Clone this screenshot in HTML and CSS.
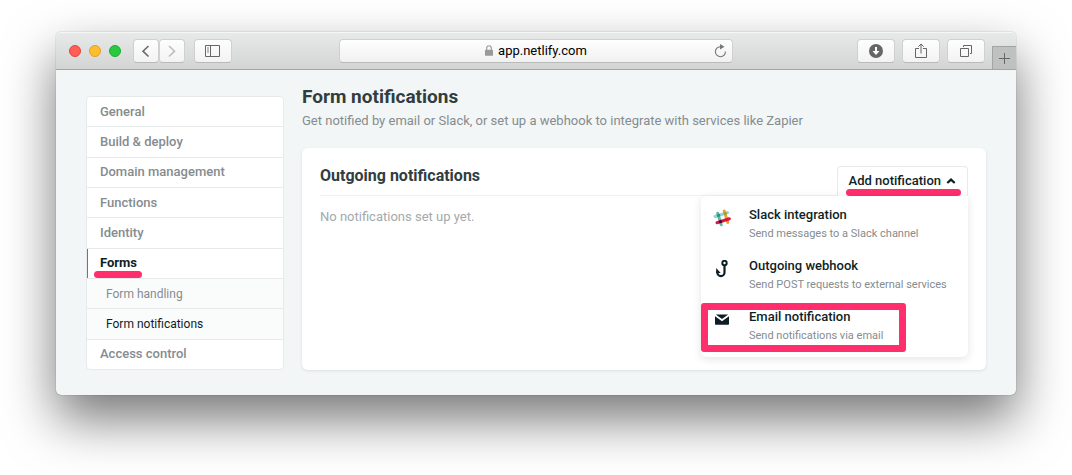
FILE: index.html
```
<!DOCTYPE html>
<html lang="en">
<head>
    <meta charset="UTF-8">
    <meta name="viewport" content="width=device-width, initial-scale=1.0">
    <title>Form notifications</title>
    <link rel="stylesheet" href="styles.css">
</head>
<body>
    <div class="window">
        <header class="toolbar">
            <div class="lights">
                <span class="light red"></span>
                <span class="light yellow"></span>
                <span class="light green"></span>
            </div>
            <div class="nav-buttons">
                <button class="tool-btn nav-btn" aria-label="Back">
                    <svg width="26" height="22" viewBox="0 0 26 22"><path d="M15.5 6 L10 11.2 L15.5 16.5" fill="none" stroke="#6b6b6b" stroke-width="1.6"/></svg>
                </button>
                <button class="tool-btn nav-btn" aria-label="Forward">
                    <svg width="26" height="22" viewBox="0 0 26 22"><path d="M10 6 L15.5 11.2 L10 16.5" fill="none" stroke="#bdbdbd" stroke-width="1.6"/></svg>
                </button>
            </div>
            <button class="tool-btn" aria-label="Show sidebar">
                <svg width="16" height="12" viewBox="0 0 16 12" fill="none" stroke="#666"><path d="M.5 .5h14v11H.5z M5.500 .5v11"/><path d="M2 3h2M2 5h2M2 7h2" stroke-width=".8"/></svg>
            </button>
            <div class="address">
                <svg class="lock" width="8" height="11" viewBox="0 0 8 11"><path d="M1.700 5V3a2.300 2.300 0 0 1 4.600 0v2" fill="none" stroke="#999" stroke-width="1.100"/><rect y="4.800" width="8" height="6" rx=".6" fill="#999"/></svg>
                <span>app.netlify.com</span>
                <button class="reload" aria-label="Reload">
                    <svg width="13" height="14" viewBox="0 0 13 14"><path d="M6 2.700A5 5 0 1 0 11.400 7.500" fill="none" stroke="#777" stroke-width="1.100"/><path d="M6 0l4.500 2.800L6 5.500z" fill="#777"/></svg>
                </button>
            </div>
            <div class="tools">
                <button class="tool-btn" aria-label="Downloads">
                    <svg width="14" height="14" viewBox="0 0 14 14"><circle cx="7" cy="7" r="7" fill="#666"/><path d="M6 3h2v4h2.500L7 11 3.500 7H6z" fill="#fff"/></svg>
                </button>
                <button class="tool-btn" aria-label="Share">
                    <svg width="12" height="16" viewBox="0 0 12 16" fill="none" stroke="#666"><path d="M4 5.500H.5v9h11v-9H8M6 1v9.500M3.300 3.700L6 1l2.700 2.700"/></svg>
                </button>
                <button class="tool-btn" aria-label="Show tabs">
                    <svg width="12" height="12" viewBox="0 0 12 12" fill="none" stroke="#666"><path d="M.5 3.500h8v8h-8zM3.500 2V.5h8v8H10"/></svg>
                </button>
            </div>
            <button class="new-tab" aria-label="New tab">
                <svg width="11" height="11" viewBox="0 0 11 11"><path d="M5.500 0v11M0 5.500h11" stroke="#666"/></svg>
            </button>
        </header>

        <div class="content">
            <nav class="sidebar">
                <a href="#">General</a>
                <a href="#">Build &amp; deploy</a>
                <a href="#">Domain management</a>
                <a href="#">Functions</a>
                <a href="#">Identity</a>
                <a href="#" class="active"><span class="marked">Forms</span></a>
                <a href="#" class="sub">Form handling</a>
                <a href="#" class="sub current">Form notifications</a>
                <a href="#">Access control</a>
            </nav>

            <main class="main">
                <h1>Form notifications</h1>
                <p class="intro">Get notified by email or Slack, or set up a webhook to integrate with services like Zapier</p>

                <section class="card">
                    <div class="card-header">
                        <h2>Outgoing notifications</h2>
                        <div class="dropdown">
                            <button class="dropdown-toggle" aria-expanded="true">
                                <span class="marked">Add notification</span>
                                <svg width="10" height="6" viewBox="0 0 10 6"><path d="M1.300 5L5 1.600 8.700 5" fill="none" stroke="#0e1e25" stroke-width="2.200"/></svg>
                            </button>
                            <div class="menu">
                                <button class="menu-item">
                                    <svg width="18" height="18" viewBox="0 0 18 18" fill="none" stroke-width="3" stroke-linecap="round">
                                        <path d="M2 7.500L14.500 3.600" stroke="#8fd3df"/>
                                        <path d="M11.200 2L14.800 13.500" stroke="#e9a820"/>
                                        <path d="M4.600 4.200L8.300 15.800" stroke="#5cbf9f"/>
                                        <path d="M4 13.700L16.300 9.800" stroke="#e01550"/>
                                        <path d="M7.300 12.700L7.600 12.600" stroke="#331433"/>
                                        <path d="M5.500 6.500L5.800 6.400" stroke="#2a937d"/>
                                        <path d="M12.100 4.600L12.400 4.500" stroke="#9aa03a"/>
                                        <path d="M13.800 10.700L14.100 10.600" stroke="#cc2027"/>
                                    </svg>
                                    <span class="item-text">
                                        <span class="item-title">Slack integration</span>
                                        <span class="item-desc">Send messages to a Slack channel</span>
                                    </span>
                                </button>
                                <button class="menu-item">
                                    <svg width="18" height="18" viewBox="0 0 18 18" fill="none" stroke="#0e1e25">
                                        <circle cx="11.500" cy="3" r="2.200" stroke-width="2"/>
                                        <path d="M11.500 5v7.500a3.600 3.600 0 0 1-7.200 0V11" stroke-width="2.200"/>
                                        <path d="M3.200 8v5h4.500z" fill="#0e1e25" stroke="none"/>
                                    </svg>
                                    <span class="item-text">
                                        <span class="item-title">Outgoing webhook</span>
                                        <span class="item-desc">Send POST requests to external services</span>
                                    </span>
                                </button>
                                <button class="menu-item highlighted">
                                    <svg width="18" height="18" viewBox="0 0 18 18" fill="#0e1e25">
                                        <path d="M2.800 3.500h12.400L9 8z"/>
                                        <path d="M2 5.200l7 5.100 7-5.100V13a.8.8 0 0 1-.8.8H2.800A.8.8 0 0 1 2 13z"/>
                                    </svg>
                                    <span class="item-text">
                                        <span class="item-title">Email notification</span>
                                        <span class="item-desc">Send notifications via email</span>
                                    </span>
                                </button>
                            </div>
                        </div>
                    </div>
                    <p class="empty">No notifications set up yet.</p>
                </section>
            </main>
        </div>
    </div>
</body>
</html>
```
FILE: styles.css
```
:root {
    --page-bg: #f2f6f7;
    --border-color: #e6eaea;
    --text-dark: #0e1e25;
    --text-heading: #313d3e;
    --text-muted: #858c8f;
    --marker: #ff2e6c;
}

* {
    box-sizing: border-box;
}

body {
    font-family: Roboto, "Liberation Sans", sans-serif;
    font-size: 13px;
    line-height: 16px;
    background-color: #fff;
    color: var(--text-dark);
    margin: 0;
    padding: 32px 56px 80px;
}

button {
    font: inherit;
    color: inherit;
    margin: 0;
    padding: 0;
    border: none;
    background: none;
    cursor: pointer;
}

h1, h2, p {
    margin: 0;
}

svg {
    flex: none;
}

.window {
    background-color: var(--page-bg);
    border-radius: 5px;
    box-shadow: 0 0 1px rgba(0, 0, 0, 0.6), 0 24px 52px rgba(0, 0, 0, 0.54);
}

/* Browser toolbar */
.toolbar {
    display: flex;
    align-items: center;
    height: 38px;
    padding-left: 13px;
    border-bottom: 1px solid #a3a5a5;
    border-radius: 5px 5px 0 0;
    background: linear-gradient(#e8eae9, #d3d5d4);
    box-shadow: inset 0 1px 0 #f5f6f6;
}

.lights {
    display: flex;
    gap: 8px;
    margin-right: 12px;
}

.light {
    width: 12px;
    height: 12px;
    border-radius: 50%;
    border: 1px solid;
}

.red {
    background-color: #ff5f57;
    border-color: #e2463f;
}

.yellow {
    background-color: #ffbd2e;
    border-color: #e0a02a;
}

.green {
    background-color: #28c940;
    border-color: #1eac30;
}

.nav-buttons {
    display: flex;
    margin-right: 9px;
}

.tool-btn {
    display: flex;
    align-items: center;
    justify-content: center;
    width: 38px;
    height: 24px;
    border: 1px solid #cfd1d0;
    border-bottom-color: #b9bbba;
    border-radius: 4px;
    background: linear-gradient(#fefefe, #f3f3f3);
}

.nav-btn {
    width: 26px;
}

.address {
    flex: 0 1 394px;
    position: relative;
    display: flex;
    align-items: center;
    justify-content: center;
    gap: 5px;
    height: 24px;
    margin: 0 auto 0 107px;
    border: 1px solid #cfd1d0;
    border-bottom-color: #b9bbba;
    border-radius: 4px;
    background: linear-gradient(#fefefe, #f1f1f1);
    color: #000;
}

.reload {
    position: absolute;
    right: 5px;
    top: 4px;
    height: 14px;
    display: flex;
}

.tools {
    display: flex;
    gap: 7px;
    margin-right: 7px;
}

.new-tab {
    display: flex;
    align-items: center;
    justify-content: center;
    align-self: flex-end;
    width: 24px;
    height: 23px;
    border: 1px solid #a3a5a5;
    border-width: 1px 0 0 1px;
    background-color: #bfc1c0;
}

/* Settings page */
.content {
    display: flex;
    gap: 18px;
    padding: 16px 30px 25px;
}

.sidebar {
    display: flex;
    flex-direction: column;
    flex: 0 0 198px;
    margin-top: 10px;
    border: 1px solid var(--border-color);
    border-radius: 4px;
    background-color: #fff;
}

.sidebar a {
    display: flex;
    flex: 1;
    align-items: center;
    padding: 0 13px;
    color: var(--text-muted);
    font-weight: 500;
    text-decoration: none;
}

.sidebar a + a {
    border-top: 1px solid var(--border-color);
}

.sidebar .active {
    box-shadow: inset 1px 0 0 #1a9f8c;
    color: var(--text-dark);
    font-weight: 700;
}

.sidebar .sub {
    padding-left: 19px;
    background-color: #fafcfc;
    font-size: 12px;
    font-weight: 400;
}

.sidebar .current {
    color: var(--text-dark);
}

/* Thick marker line under a label */
.marked {
    position: relative;
}

.marked::after {
    content: "";
    position: absolute;
    left: -6px;
    right: -5px;
    bottom: -7px;
    height: 7px;
    border-radius: 4px;
    background-color: var(--marker);
}

.main {
    flex: 1;
}

h1 {
    color: var(--text-heading);
    font-size: 19px;
    line-height: 22px;
}

.intro {
    margin: 5px 0 19px;
    color: var(--text-muted);
}

.card {
    min-height: 222px;
    padding: 18px;
    border-radius: 6px;
    background-color: #fff;
    box-shadow: 0 1px 3px rgba(14, 30, 37, 0.1);
}

.card-header {
    display: flex;
    justify-content: space-between;
    border-bottom: 1px solid #f0f2f2;
}

h2 {
    color: var(--text-heading);
    font-size: 16px;
    line-height: 20px;
}

.dropdown {
    position: relative;
}

.dropdown-toggle {
    display: flex;
    align-items: center;
    gap: 5px;
    height: 30px;
    margin-bottom: -1px;
    padding: 0 11px 1px;
    border: 1px solid var(--border-color);
    border-bottom: none;
    border-radius: 4px 4px 0 0;
    background-color: #fff;
    font-weight: 500;
}

.dropdown-toggle .marked::after {
    left: -3px;
    right: -20px;
}

.menu {
    position: absolute;
    top: calc(100% + 1px);
    right: 0;
    width: 267px;
    padding: 5px 0 3px;
    border-radius: 6px 0 6px 6px;
    background-color: #fff;
    box-shadow: 0 2px 8px rgba(14, 30, 37, 0.12);
}

.menu-item {
    position: relative;
    display: flex;
    gap: 18px;
    width: 100%;
    padding: 6px 12px 10px;
    text-align: left;
}

.menu-item svg {
    margin-top: 2px;
}

.item-text {
    display: flex;
    flex-direction: column;
    gap: 3px;
}

.item-title {
    font-weight: 500;
}

.item-desc {
    color: var(--text-muted);
    font-size: 11px;
}

.highlighted::after {
    content: "";
    position: absolute;
    inset: 0 62px 2px 0;
    border: 7px solid var(--marker);
    border-radius: 3px;
}

.empty {
    margin-top: 13px;
    color: #a3a9ac;
}
```
